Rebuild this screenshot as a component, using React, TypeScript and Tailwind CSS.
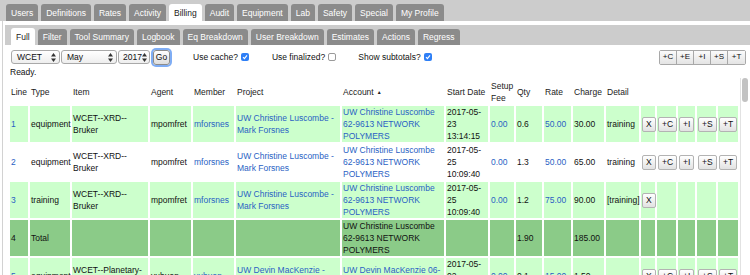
import React from 'react';

const topTabs = ['Users', 'Definitions', 'Rates', 'Activity', 'Billing', 'Audit', 'Equipment', 'Lab', 'Safety', 'Special', 'My Profile'];
const subTabs = ['Full', 'Filter', 'Tool Summary', 'Logbook', 'Eq Breakdown', 'User Breakdown', 'Estimates', 'Actions', 'Regress'];

const colWidths = [
  'w-[18px]', 'w-[40px]', 'w-[76px]', 'w-[41px]', 'w-[41px]', 'w-[104px]', 'w-[102px]', 'w-[42px]', 'w-[24px]',
  'w-[26px]', 'w-[27px]', 'w-[31px]', 'w-[33px]', 'w-[14px]', 'w-[19px]', 'w-[17px]', 'w-[19px]', 'w-[20px]',
];

type Row = {
  kind: 'green' | 'white' | 'total';
  line: string;
  type: string;
  item: string;
  agent: string;
  member: string;
  project: string;
  account: string;
  start: string;
  setup: string;
  qty: string;
  rate: string;
  charge: string;
  detail: string;
  buttons: 'all' | 'x' | 'none';
};

const rows: Row[] = [
  {
    kind: 'green', line: '1', type: 'equipment', item: 'WCET--XRD--Bruker', agent: 'mpomfret', member: 'mforsnes',
    project: 'UW Christine Luscombe - Mark Forsnes', account: 'UW Christine Luscombe 62-9613 NETWORK POLYMERS',
    start: '2017-05-23 13:14:15', setup: '0.00', qty: '0.6', rate: '50.00', charge: '30.00', detail: 'training', buttons: 'all',
  },
  {
    kind: 'white', line: '2', type: 'equipment', item: 'WCET--XRD--Bruker', agent: 'mpomfret', member: 'mforsnes',
    project: 'UW Christine Luscombe - Mark Forsnes', account: 'UW Christine Luscombe 62-9613 NETWORK POLYMERS',
    start: '2017-05-25 10:09:40', setup: '0.00', qty: '1.3', rate: '50.00', charge: '65.00', detail: 'training', buttons: 'all',
  },
  {
    kind: 'green', line: '3', type: 'training', item: 'WCET--XRD--Bruker', agent: 'mpomfret', member: 'mforsnes',
    project: 'UW Christine Luscombe - Mark Forsnes', account: 'UW Christine Luscombe 62-9613 NETWORK POLYMERS',
    start: '2017-05-25 10:09:40', setup: '0.00', qty: '1.2', rate: '75.00', charge: '90.00', detail: '[training]', buttons: 'x',
  },
  {
    kind: 'total', line: '4', type: 'Total', item: '', agent: '', member: '', project: '',
    account: 'UW Christine Luscombe 62-9613 NETWORK POLYMERS', start: '', setup: '', qty: '1.90', rate: '', charge: '185.00',
    detail: '', buttons: 'none',
  },
  {
    kind: 'green', line: '5', type: 'equipment', item: 'WCET--Planetary-Mill', agent: 'yubuan', member: 'yubuan',
    project: 'UW Devin MacKenzie - Yubuan Zhang', account: 'UW Devin MacKenzie 06-4123 CEI BUDGET',
    start: '2017-05-02 09:55:10', setup: '0.00', qty: '0.1', rate: '15.00', charge: '1.50', detail: '', buttons: 'all',
  },
];

const Link: React.FC<{ children: React.ReactNode }> = ({ children }) => (
  <a className="text-[#2a5fc4]">{children}</a>
);

const Arrows = () => (
  <svg width="5" height="9" viewBox="0 0 5 9" className="shrink-0">
    <path d="M2.5 0 L5 3.5 H0 Z" fill="#333" />
    <path d="M2.5 9 L5 5.5 H0 Z" fill="#333" />
  </svg>
);

const FakeSelect: React.FC<{ value: string; width: string; pad: string }> = ({ value, width, pad }) => (
  <div
    className={`flex h-[14px] ${width} items-center justify-between rounded-[3px] border border-[#a9a9a9] bg-linear-to-b from-white to-[#eeeeee] ${pad}`}
  >
    <span>{value}</span>
    <Arrows />
  </div>
);

const Check: React.FC<{ on?: boolean }> = ({ on }) =>
  on ? (
    <span className="ml-[3px] flex h-[8px] w-[8px] items-center justify-center rounded-[2px] bg-[#2e7ff6]">
      <svg width="6" height="6" viewBox="0 0 6 6">
        <path d="M1 3.2 L2.4 4.6 L5 1.4" stroke="white" strokeWidth="1.1" fill="none" />
      </svg>
    </span>
  ) : (
    <span className="ml-[3px] h-[8px] w-[8px] rounded-[2px] border border-[#9a9a9a] bg-white" />
  );

const RowButton: React.FC<{ label: string }> = ({ label }) => (
  <span className="inline-flex h-[15px] items-center rounded-[2px] border border-[#b3b3b3] bg-linear-to-b from-white to-[#e2e2e2] px-[3px] leading-none text-[#111]">
    {label}
  </span>
);

export default function App() {
  return (
    <div className="flex h-[275px] w-[750px] flex-col overflow-hidden bg-white font-['Liberation_Sans',Arial,sans-serif] text-[8.5px] leading-[12px] text-[#111]">
      {/* main tabs */}
      <div className="flex h-[21px] shrink-0 items-end gap-[3px] bg-[#cccccc] pl-[6px]">
        {topTabs.map((t) => (
          <div
            key={t}
            className={`flex h-[17px] items-center rounded-t-[3px] px-[5px] ${
              t === 'Billing' ? 'bg-white text-[#222]' : 'bg-[#8b8b8b] text-white'
            }`}
          >
            {t}
          </div>
        ))}
      </div>

      <div className="ml-[2px] flex min-h-0 flex-1 flex-col border-l border-[#d2d2d2] pt-[4px]">
        {/* sub tabs */}
        <div className="ml-[2px] flex h-[20px] shrink-0 items-end gap-[3px] bg-[#cccccc] pl-[6px]">
          {subTabs.map((t) => (
            <div
              key={t}
              className={`flex items-center rounded-t-[3px] px-[5px] ${
                t === 'Full' ? 'h-[17px] bg-white text-[#222]' : 'h-[16px] bg-[#8b8b8b] text-white'
              }`}
            >
              {t}
            </div>
          ))}
        </div>

        {/* controls */}
        <div className="mt-[3px] flex h-[18px] shrink-0 items-center pl-[8px] pr-[4px]">
          <FakeSelect value="WCET" width="w-[49px]" pad="pl-[5px] pr-[3px]" />
          <div className="ml-[1px]">
            <FakeSelect value="May" width="w-[56px]" pad="pl-[5px] pr-[3px]" />
          </div>
          <div className="ml-[1px]">
            <FakeSelect value="2017" width="w-[32px]" pad="pl-[4px] pr-[2px]" />
          </div>
          <button className="ml-[3px] flex h-[15px] w-[17px] items-center justify-center rounded-[3px] border border-[#8c8c8c] bg-linear-to-b from-white to-[#dedede] text-[8.5px] ring-2 ring-[#7fadf4]">
            Go
          </button>
          <span className="ml-[23px]">Use cache?</span>
          <Check on />
          <span className="ml-[23px]">Use finalized?</span>
          <Check />
          <span className="ml-[22px]">Show subtotals?</span>
          <Check on />
          <div className="ml-auto flex divide-x divide-[#a8a8a8] rounded-[2px] border border-[#a8a8a8]">
            {['+C', '+E', '+I', '+S', '+T'].map((b) => (
              <span
                key={b}
                className="flex h-[13px] w-[17px] items-center justify-center bg-linear-to-b from-[#fbfbfb] to-[#e4e4e4] text-[8px] leading-none"
              >
                {b}
              </span>
            ))}
          </div>
        </div>

        <div className="h-[12px] shrink-0 pl-[7px]">Ready.</div>

        {/* table + scrollbar */}
        <div className="flex min-h-0 flex-1">
          <div className="min-w-0 flex-1 overflow-hidden pl-[5px]">
            <table className="w-[732px] table-fixed border-separate border-spacing-[2px]">
              <colgroup>
                {colWidths.map((w, i) => (
                  <col key={i} className={w} />
                ))}
              </colgroup>
              <thead>
                <tr>
                  {['Line', 'Type', 'Item', 'Agent', 'Member', 'Project', 'Account', 'Start Date', 'Setup Fee', 'Qty', 'Rate', 'Charge', 'Detail', '', '', '', '', ''].map(
                    (h, i) => (
                      <th key={i} className="px-[1px] text-left align-middle font-normal text-[#222]">
                        {h}
                        {h === 'Account' && <span className="ml-[3px] text-[5px] align-middle">▲</span>}
                      </th>
                    )
                  )}
                </tr>
              </thead>
              <tbody>
                {rows.map((r) => {
                  const bg = r.kind === 'green' ? 'bg-[#ccffcc]' : r.kind === 'total' ? 'bg-[#8bcb88]' : '';
                  const td = `px-[1px] align-middle ${bg}`;
                  const link = r.kind !== 'total';
                  const btn = (label: string, show: boolean) => (
                    <td className={`${td} text-center`}>{show && <RowButton label={label} />}</td>
                  );
                  return (
                    <tr key={r.line} className="h-[36px]">
                      <td className={td}>{link ? <Link>{r.line}</Link> : r.line}</td>
                      <td className={td}>{r.type}</td>
                      <td className={td}>{r.item}</td>
                      <td className={td}>{r.agent}</td>
                      <td className={td}>{r.member && <Link>{r.member}</Link>}</td>
                      <td className={td}>{r.project && <Link>{r.project}</Link>}</td>
                      <td className={td}>{link ? <Link>{r.account}</Link> : r.account}</td>
                      <td className={td}>{r.start}</td>
                      <td className={td}>{r.setup && <Link>{r.setup}</Link>}</td>
                      <td className={td}>{r.qty}</td>
                      <td className={td}>{r.rate && <Link>{r.rate}</Link>}</td>
                      <td className={td}>{r.charge}</td>
                      <td className={td}>{r.detail}</td>
                      {btn('X', r.buttons !== 'none')}
                      {btn('+C', r.buttons === 'all')}
                      {btn('+I', r.buttons === 'all')}
                      {btn('+S', r.buttons === 'all')}
                      {btn('+T', r.buttons === 'all')}
                    </tr>
                  );
                })}
              </tbody>
            </table>
          </div>
          <div className="w-[10px] shrink-0 border-l border-[#e2e2e2] pl-[1px]">
            <div className="h-[24px] w-[6px] rounded-full bg-[#c2c2c2]" />
          </div>
        </div>
      </div>
    </div>
  );
}
